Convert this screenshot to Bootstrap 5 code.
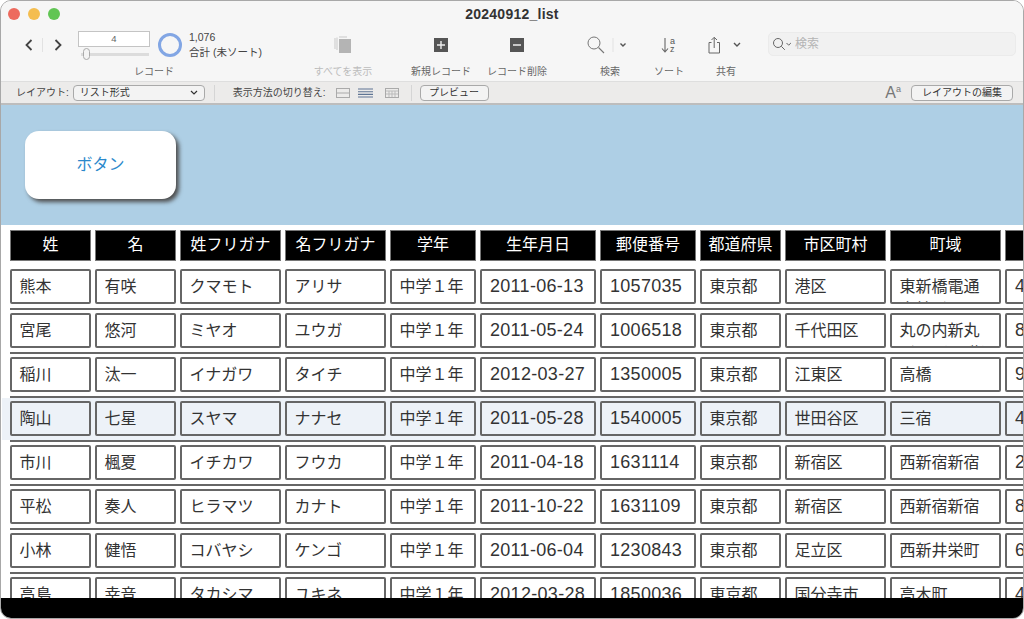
<!DOCTYPE html>
<html lang="ja">
<head>
<meta charset="utf-8">
<title>20240912_list</title>
<link href="https://cdn.jsdelivr.net/npm/bootstrap@5.3.0/dist/css/bootstrap.min.css" rel="stylesheet">
<style>
html,body{height:100%;margin:0;background:#fff;overflow:hidden}
body{font-family:"Liberation Sans","Noto Sans CJK JP",sans-serif;color:#222}
.win{width:1024px;height:619px;border:1px solid #a8a8a8;border-radius:11px;overflow:hidden;background:#fff}
.titlerow{height:26px;background:#f6f6f6;display:grid;grid-template-columns:1fr auto 1fr;align-items:center;flex:none}
.lights{padding-left:7px;gap:8px}
.lt{width:12px;height:12px;border-radius:50%}
.lt-r{background:#ed6a5e}.lt-y{background:#f4bd4f}.lt-g{background:#61c554}
.wtitle{font:700 14px "Liberation Sans",sans-serif;color:#333;letter-spacing:.25px}
.toolrow{height:54px;background:#f6f6f6;position:relative}
.tg{height:54px}
.tic{height:36px}
.tlabel{font-size:10px;line-height:14px;color:#666;white-space:nowrap;margin-top:2px}
.tlabel-off{color:#bcbcbc}
.tg-rec{width:268px;margin-left:19px}
.tg-all{width:110px}.tg-new{width:86px}.tg-del{width:66px}
.tg-find{width:70px;margin-left:25px}.tg-sort{width:48px}.tg-share{width:66px}
.navsep{width:1px;height:14px;background:#e2e2e2;margin:0 6px 0 8px}
.recbox{width:72px;margin-left:15px}
.recnum{height:16px;background:#fff;border:1px solid #c4c4c4;font-size:9.5px;line-height:14px;text-align:center;color:#666}
.slide{height:12px;margin-top:1px;position:relative}
.slide-track{position:absolute;left:3px;right:1px;top:5px;height:3px;background:#dcdcdc}
.slide-thumb{position:absolute;left:5px;top:0;width:7px;height:12px;border:1px solid #aaa;border-radius:4px;background:#f4f4f4}
.ring{width:24px;height:24px;border:3px solid #82a6e4;border-radius:50%;margin-left:8px}
.reccount{font-size:10.5px;line-height:15px;color:#444;margin-left:7px;white-space:nowrap}
.sfield{width:248px;height:24px;margin-left:9px;margin-top:5px;background:#f1f1f1;border:1px solid #ebebeb;border-radius:5px;font-size:12px;color:#b4b4b4;padding-left:3px;gap:2px}
.layoutbar{height:24px;background:#ecebea;border-top:1px solid #dedede;border-bottom:2px solid #bdbdbd;font-size:10px;color:#444;white-space:nowrap}
.lb1{margin-left:15px}
.sel{width:132px;height:16px;margin-left:4px;border:1px solid #a9a9a9;border-radius:4px;background:#f3f3f3;font-size:10px;line-height:14px;padding:0 6px;color:#333}
.vsep{width:1px;height:16px;background:#d5d5d5}
.vsep1{margin:0 18px 0 9px}.vsep2{margin:0 8px 0 14px}
.pv{height:16px;border:1px solid #a9a9a9;border-radius:4px;background:#f3f3f3;font-size:10px;line-height:14px;text-align:center;color:#333}
.pv1{width:69px}.pv2{width:102px;margin-left:10px;margin-right:10px}
.vic{gap:8px;margin-left:10px;margin-right:-2px}
.aa{font:16px "Liberation Sans",sans-serif;color:#777;line-height:16px}
.aa sup{font-size:9px;top:-.6em}
.hero{height:120px;background:#aecfe5;padding:26px 0 0 24px;flex:none}
.fmbtn{width:151px;height:68px;background:#fff;border-radius:14px;box-shadow:3px 3px 4px #4d4d4d;color:#2b88cb;font-size:16px}
.tblarea{overflow:hidden;background:#fff;min-height:0;padding-top:5px;flex:1 1 0}
.trow{display:grid;grid-template-columns:81px 81px 101px 101px 86px 116px 96px 81px 101px 111px 100px;column-gap:4px;width:1100px;margin-left:9px}
.thead{height:31px;margin-bottom:5px}
.hc{background:#000;color:#fff;border:1px solid #777;font-size:16px;line-height:28px;text-align:center;white-space:nowrap}
.rowwrap{height:44px;padding:3px 0 4px;border-bottom:2px solid #666;margin-left:9px;width:1100px}
.rowwrap .trow{margin-left:0}
.hl{border-bottom:0;margin-left:1px;padding-left:8px;padding-bottom:6px;width:1108px;background:linear-gradient(#666,#666) 8px 100%/100% 2px no-repeat,linear-gradient(#fff,#fff) 0 100%/8px 2px no-repeat,#edf2f8}
.dc{height:35px;border:2px solid #666;border-radius:2px;background:#fff;font-size:16px;line-height:23px;padding:4px 7.5px 0;overflow:hidden;color:#333}
.num{font-size:18px;letter-spacing:.3px;padding-left:8px}
.hl .dc{background:#edf2f8}
.blackbar{height:20px;background:#000;flex:none}
</style>
</head>
<body>
<div class="win d-flex flex-column">
  <div class="titlerow">
    <div class="lights d-flex"><span class="lt lt-r"></span><span class="lt lt-y"></span><span class="lt lt-g"></span></div>
    <div class="wtitle">20240912_list</div>
    <div></div>
  </div>
  <div class="toolrow d-flex flex-shrink-0">
    <div class="tg tg-rec d-flex flex-column align-items-center">
      <div class="tic d-flex align-items-center w-100">
        <svg width="10" height="14" viewBox="0 0 10 14" class="ms-1"><path d="M7.500 2 2.500 7l5 5" fill="none" stroke="#444" stroke-width="1.800"/></svg>
        <span class="navsep"></span>
        <svg width="10" height="14" viewBox="0 0 10 14" class="ms-1"><path d="M2.500 2l5 5-5 5" fill="none" stroke="#444" stroke-width="1.800"/></svg>
        <div class="recbox">
          <div class="recnum">4</div>
          <div class="slide"><span class="slide-track"></span><span class="slide-thumb"></span></div>
        </div>
        <span class="ring"></span>
        <div class="reccount"><div>1,076</div><div>合計 (未ソート)</div></div>
      </div>
      <div class="tlabel">レコード</div>
    </div>
    <div class="tg tg-all d-flex flex-column align-items-center">
      <div class="tic d-flex align-items-center">
        <svg width="18" height="18" viewBox="0 0 18 18"><path d="M1 2v11M3 1.500v12.500M5 1h8" fill="none" stroke="#c9c9c9"/><rect x="5" y="3" width="12" height="14" fill="#b4b4b4"/></svg>
      </div>
      <div class="tlabel tlabel-off">すべてを表示</div>
    </div>
    <div class="tg tg-new d-flex flex-column align-items-center">
      <div class="tic d-flex align-items-center">
        <svg width="14" height="14" viewBox="0 0 14 14"><rect width="14" height="14" fill="#555"/><path d="M7 3v8M3 7h8" stroke="#eee" stroke-width="1.400"/></svg>
      </div>
      <div class="tlabel">新規レコード</div>
    </div>
    <div class="tg tg-del d-flex flex-column align-items-center">
      <div class="tic d-flex align-items-center">
        <svg width="14" height="14" viewBox="0 0 14 14"><rect width="14" height="14" fill="#555"/><path d="M3 7h8" stroke="#eee" stroke-width="1.400"/></svg>
      </div>
      <div class="tlabel">レコード削除</div>
    </div>
    <div class="tg tg-find d-flex flex-column align-items-center">
      <div class="tic d-flex align-items-center">
        <svg width="46" height="18" viewBox="0 0 46 18"><circle cx="7" cy="7" r="6" fill="none" stroke="#777"/><path d="M11.500 11.500l5.500 5.500" stroke="#777" stroke-width="1.100"/><path d="M26 2v14" stroke="#e2e2e2"/><path d="M33.500 7.500l2.500 2.500 2.500-2.500" fill="none" stroke="#555" stroke-width="1.400"/></svg>
      </div>
      <div class="tlabel">検索</div>
    </div>
    <div class="tg tg-sort d-flex flex-column align-items-center">
      <div class="tic d-flex align-items-center">
        <svg width="16" height="18" viewBox="0 0 16 18"><path d="M4 2v14M1 12.500 4 16l3-3.500" fill="none" stroke="#666" stroke-width="1.100"/><text x="9" y="7.500" font-size="9" fill="#555" font-family="Liberation Sans">a</text><text x="9" y="16" font-size="9" fill="#555" font-family="Liberation Sans">z</text></svg>
      </div>
      <div class="tlabel">ソート</div>
    </div>
    <div class="tg tg-share d-flex flex-column align-items-center">
      <div class="tic d-flex align-items-center">
        <svg width="36" height="18" viewBox="0 0 36 18"><path d="M3.500 6.500H1v10.500h10.500V6.500H9" fill="none" stroke="#666"/><path d="M6.200 12V1.500M3.500 4 6.200 1.300 9 4" fill="none" stroke="#666"/><path d="M26 7l3 3 3-3" fill="none" stroke="#555" stroke-width="1.400"/></svg>
      </div>
      <div class="tlabel">共有</div>
    </div>
    <div class="sfield d-flex align-items-center">
      <svg width="21" height="14" viewBox="0 0 21 14"><circle cx="6" cy="6" r="4.500" fill="none" stroke="#666"/><path d="M9.300 9.300l3.500 3.500" stroke="#666"/><path d="M14.500 6l2.200 2.200 2.200-2.200" fill="none" stroke="#666"/></svg>
      <span>検索</span>
    </div>
  </div>
  <div class="layoutbar d-flex align-items-center flex-shrink-0">
    <span class="lb1">レイアウト:</span>
    <div class="sel d-flex justify-content-between align-items-center"><span>リスト形式</span><svg width="8" height="5" viewBox="0 0 8 5"><path d="M1 1l3 3 3-3" fill="none" stroke="#333" stroke-width="1.200"/></svg></div>
    <span class="vsep vsep1"></span>
    <span>表示方法の切り替え:</span>
    <div class="vic d-flex align-items-center">
      <svg width="14" height="10" viewBox="0 0 14 10"><rect x=".5" y=".5" width="13" height="9" fill="none" stroke="#aaa"/><path d="M1 5h12" stroke="#aaa"/></svg>
      <svg width="15" height="10" viewBox="0 0 15 10"><path d="M0 1h15M0 3.700h15M0 6.400h15M0 9h15" stroke="#5f7594" stroke-width="1.100"/></svg>
      <svg width="14" height="10" viewBox="0 0 14 10" class="ms-1"><rect x=".5" y=".5" width="13" height="9" fill="none" stroke="#aaa"/><path d="M1 3h12M1 6h12M4 3v6M7 3v6M10 3v6" stroke="#bbb"/></svg>
    </div>
    <span class="vsep vsep2"></span>
    <div class="pv pv1">プレビュー</div>
    <div class="flex-grow-1"></div>
    <span class="aa">A<sup>a</sup></span>
    <div class="pv pv2">レイアウトの編集</div>
  </div>
  <div class="hero">
    <div class="fmbtn d-flex align-items-center justify-content-center">ボタン</div>
  </div>
  <div class="tblarea">
    <div class="trow thead">
      <div class="hc">姓</div><div class="hc">名</div><div class="hc">姓フリガナ</div><div class="hc">名フリガナ</div><div class="hc">学年</div><div class="hc">生年月日</div><div class="hc">郵便番号</div><div class="hc">都道府県</div><div class="hc">市区町村</div><div class="hc">町域</div><div class="hc"></div>
    </div>
    <div class="rowwrap"><div class="trow">
      <div class="dc">熊本</div><div class="dc">有咲</div><div class="dc">クマモト</div><div class="dc">アリサ</div><div class="dc">中学１年</div><div class="dc num">2011-06-13</div><div class="dc num">1057035</div><div class="dc">東京都</div><div class="dc">港区</div><div class="dc">東新橋電通本社ビル（35階）</div><div class="dc num">4</div>
    </div></div>
    <div class="rowwrap"><div class="trow">
      <div class="dc">宮尾</div><div class="dc">悠河</div><div class="dc">ミヤオ</div><div class="dc">ユウガ</div><div class="dc">中学１年</div><div class="dc num">2011-05-24</div><div class="dc num">1006518</div><div class="dc">東京都</div><div class="dc">千代田区</div><div class="dc">丸の内新丸ビル（18階）</div><div class="dc num">8</div>
    </div></div>
    <div class="rowwrap"><div class="trow">
      <div class="dc">稲川</div><div class="dc">汰一</div><div class="dc">イナガワ</div><div class="dc">タイチ</div><div class="dc">中学１年</div><div class="dc num">2012-03-27</div><div class="dc num">1350005</div><div class="dc">東京都</div><div class="dc">江東区</div><div class="dc">高橋</div><div class="dc num">9</div>
    </div></div>
    <div class="rowwrap hl"><div class="trow">
      <div class="dc">陶山</div><div class="dc">七星</div><div class="dc">スヤマ</div><div class="dc">ナナセ</div><div class="dc">中学１年</div><div class="dc num">2011-05-28</div><div class="dc num">1540005</div><div class="dc">東京都</div><div class="dc">世田谷区</div><div class="dc">三宿</div><div class="dc num">4</div>
    </div></div>
    <div class="rowwrap"><div class="trow">
      <div class="dc">市川</div><div class="dc">楓夏</div><div class="dc">イチカワ</div><div class="dc">フウカ</div><div class="dc">中学１年</div><div class="dc num">2011-04-18</div><div class="dc num">1631114</div><div class="dc">東京都</div><div class="dc">新宿区</div><div class="dc">西新宿新宿</div><div class="dc num">2</div>
    </div></div>
    <div class="rowwrap"><div class="trow">
      <div class="dc">平松</div><div class="dc">奏人</div><div class="dc">ヒラマツ</div><div class="dc">カナト</div><div class="dc">中学１年</div><div class="dc num">2011-10-22</div><div class="dc num">1631109</div><div class="dc">東京都</div><div class="dc">新宿区</div><div class="dc">西新宿新宿</div><div class="dc num">8</div>
    </div></div>
    <div class="rowwrap"><div class="trow">
      <div class="dc">小林</div><div class="dc">健悟</div><div class="dc">コバヤシ</div><div class="dc">ケンゴ</div><div class="dc">中学１年</div><div class="dc num">2011-06-04</div><div class="dc num">1230843</div><div class="dc">東京都</div><div class="dc">足立区</div><div class="dc">西新井栄町</div><div class="dc num">6</div>
    </div></div>
    <div class="rowwrap"><div class="trow">
      <div class="dc">高島</div><div class="dc">幸音</div><div class="dc">タカシマ</div><div class="dc">ユキネ</div><div class="dc">中学１年</div><div class="dc num">2012-03-28</div><div class="dc num">1850036</div><div class="dc">東京都</div><div class="dc">国分寺市</div><div class="dc">高木町</div><div class="dc num">4</div>
    </div></div>
  </div>
  <div class="blackbar"></div>
</div>
<script src="https://cdn.jsdelivr.net/npm/bootstrap@5.3.0/dist/js/bootstrap.bundle.min.js"></script>
</body>
</html>
